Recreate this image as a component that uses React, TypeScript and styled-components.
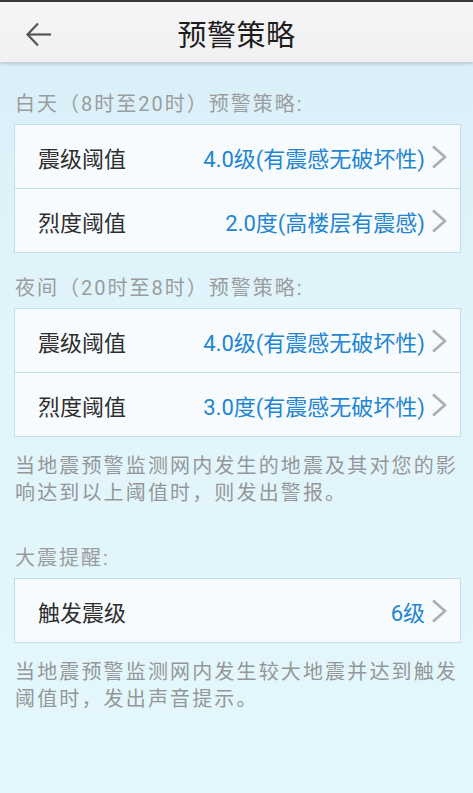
import React from "react";
import styled, { createGlobalStyle } from "styled-components";

const Global = createGlobalStyle`
  html, body { margin: 0; padding: 0; }
  body {
    font-family: "Roboto", "Noto Sans CJK SC", sans-serif;
    background: #e3f6fb;
  }
`;

const Page = styled.div`
  width: 473px;
  min-height: 793px;
  background: linear-gradient(180deg, #d8eef7 0%, #e1f4fb 40%, #e4f7fc 100%);
  border-top: 2px solid #3a3a3a;
  box-sizing: border-box;
`;

const Header = styled.header`
  position: relative;
  height: 60px;
  background: linear-gradient(180deg, #f5f4f6 0%, #f1f0f2 100%);
  box-shadow: 0 2px 3px rgba(0, 0, 0, 0.16);
  display: flex;
  align-items: center;
  justify-content: center;
`;

const BackButton = styled.button`
  position: absolute;
  left: 23px;
  top: 18px;
  width: 30px;
  height: 28px;
  padding: 0;
  border: none;
  background: none;
  display: flex;
  align-items: center;
  justify-content: center;
`;

const Title = styled.h1`
  margin: 0;
  font-family: "Noto Sans CJK SC", sans-serif;
  font-size: 29px;
  font-weight: 400;
  letter-spacing: 0.5px;
  color: #1e1e1e;
  line-height: 1;
  margin-top: 2px;
`;

const Content = styled.main`
  padding: 28px 12px 40px 14px;
  display: flex;
  flex-direction: column;
`;

const SectionLabel = styled.div<{ $top?: number }>`
  margin-top: ${(p) => p.$top ?? 0}px;
  margin-bottom: 6px;
  padding-left: 1px;
  font-family: "Roboto", "Noto Sans CJK SC", sans-serif;
  font-size: 20px;
  letter-spacing: 2px;
  line-height: 28px;
  color: #9a9d9f;
`;

const Card = styled.div`
  border: 1px solid #c4dde9;
  background: #f7fbfd;
  display: flex;
  flex-direction: column;
`;

const Row = styled.div`
  height: 63px;
  display: flex;
  align-items: center;
  padding: 0 13px 0 23px;
  & + & {
    border-top: 1px solid #c4dde9;
  }
`;

const RowLabel = styled.span`
  flex: 1;
  font-family: "Noto Sans CJK SC", sans-serif;
  font-size: 22px;
  color: #2e2e2e;
`;

const RowValue = styled.span`
  font-family: "Roboto", "Noto Sans CJK SC", sans-serif;
  font-size: 22px;
  color: #2385d2;
  margin-right: 6px;
`;

const ChevronIcon = styled.svg`
  display: block;
  flex: none;
`;

const Note = styled.p`
  margin: 14px 0 0 1px;
  font-family: "Noto Sans CJK SC", sans-serif;
  font-size: 20px;
  letter-spacing: 2.15px;
  line-height: 27px;
  color: #94979a;
`;

const Chevron = () => (
  <ChevronIcon width="16" height="24" viewBox="0 0 16 24">
    <polyline
      points="2,1.5 14,12 2,22.5"
      fill="none"
      stroke="#adadad"
      strokeWidth="2.6"
      strokeLinejoin="miter"
    />
  </ChevronIcon>
);

const BackArrow = () => (
  <svg width="27" height="25" viewBox="0 0 27 25">
    <g fill="none" stroke="#555" strokeWidth="2.2" strokeLinecap="butt">
      <line x1="2.5" y1="12.5" x2="26" y2="12.5" />
      <polyline points="13,1.5 2.5,12.5 13,23.5" />
    </g>
  </svg>
);

type Item = { label: string; value: string };

const Group = ({ items }: { items: Item[] }) => (
  <Card>
    {items.map((it) => (
      <Row key={it.label + it.value}>
        <RowLabel>{it.label}</RowLabel>
        <RowValue>{it.value}</RowValue>
        <Chevron />
      </Row>
    ))}
  </Card>
);

export default function App() {
  return (
    <>
      <Global />
      <Page>
        <Header>
          <BackButton aria-label="返回">
            <BackArrow />
          </BackButton>
          <Title>预警策略</Title>
        </Header>
        <Content>
          <SectionLabel>白天（8时至20时）预警策略:</SectionLabel>
          <Group
            items={[
              { label: "震级阈值", value: "4.0级(有震感无破坏性)" },
              { label: "烈度阈值", value: "2.0度(高楼层有震感)" },
            ]}
          />
          <SectionLabel $top={21}>夜间（20时至8时）预警策略:</SectionLabel>
          <Group
            items={[
              { label: "震级阈值", value: "4.0级(有震感无破坏性)" },
              { label: "烈度阈值", value: "3.0度(有震感无破坏性)" },
            ]}
          />
          <Note>
            当地震预警监测网内发生的地震及其对您的影
            <br />
            响达到以上阈值时，则发出警报。
          </Note>
          <SectionLabel $top={39}>大震提醒:</SectionLabel>
          <Group items={[{ label: "触发震级", value: "6级" }]} />
          <Note>
            当地震预警监测网内发生较大地震并达到触发
            <br />
            阈值时，发出声音提示。
          </Note>
        </Content>
      </Page>
    </>
  );
}
